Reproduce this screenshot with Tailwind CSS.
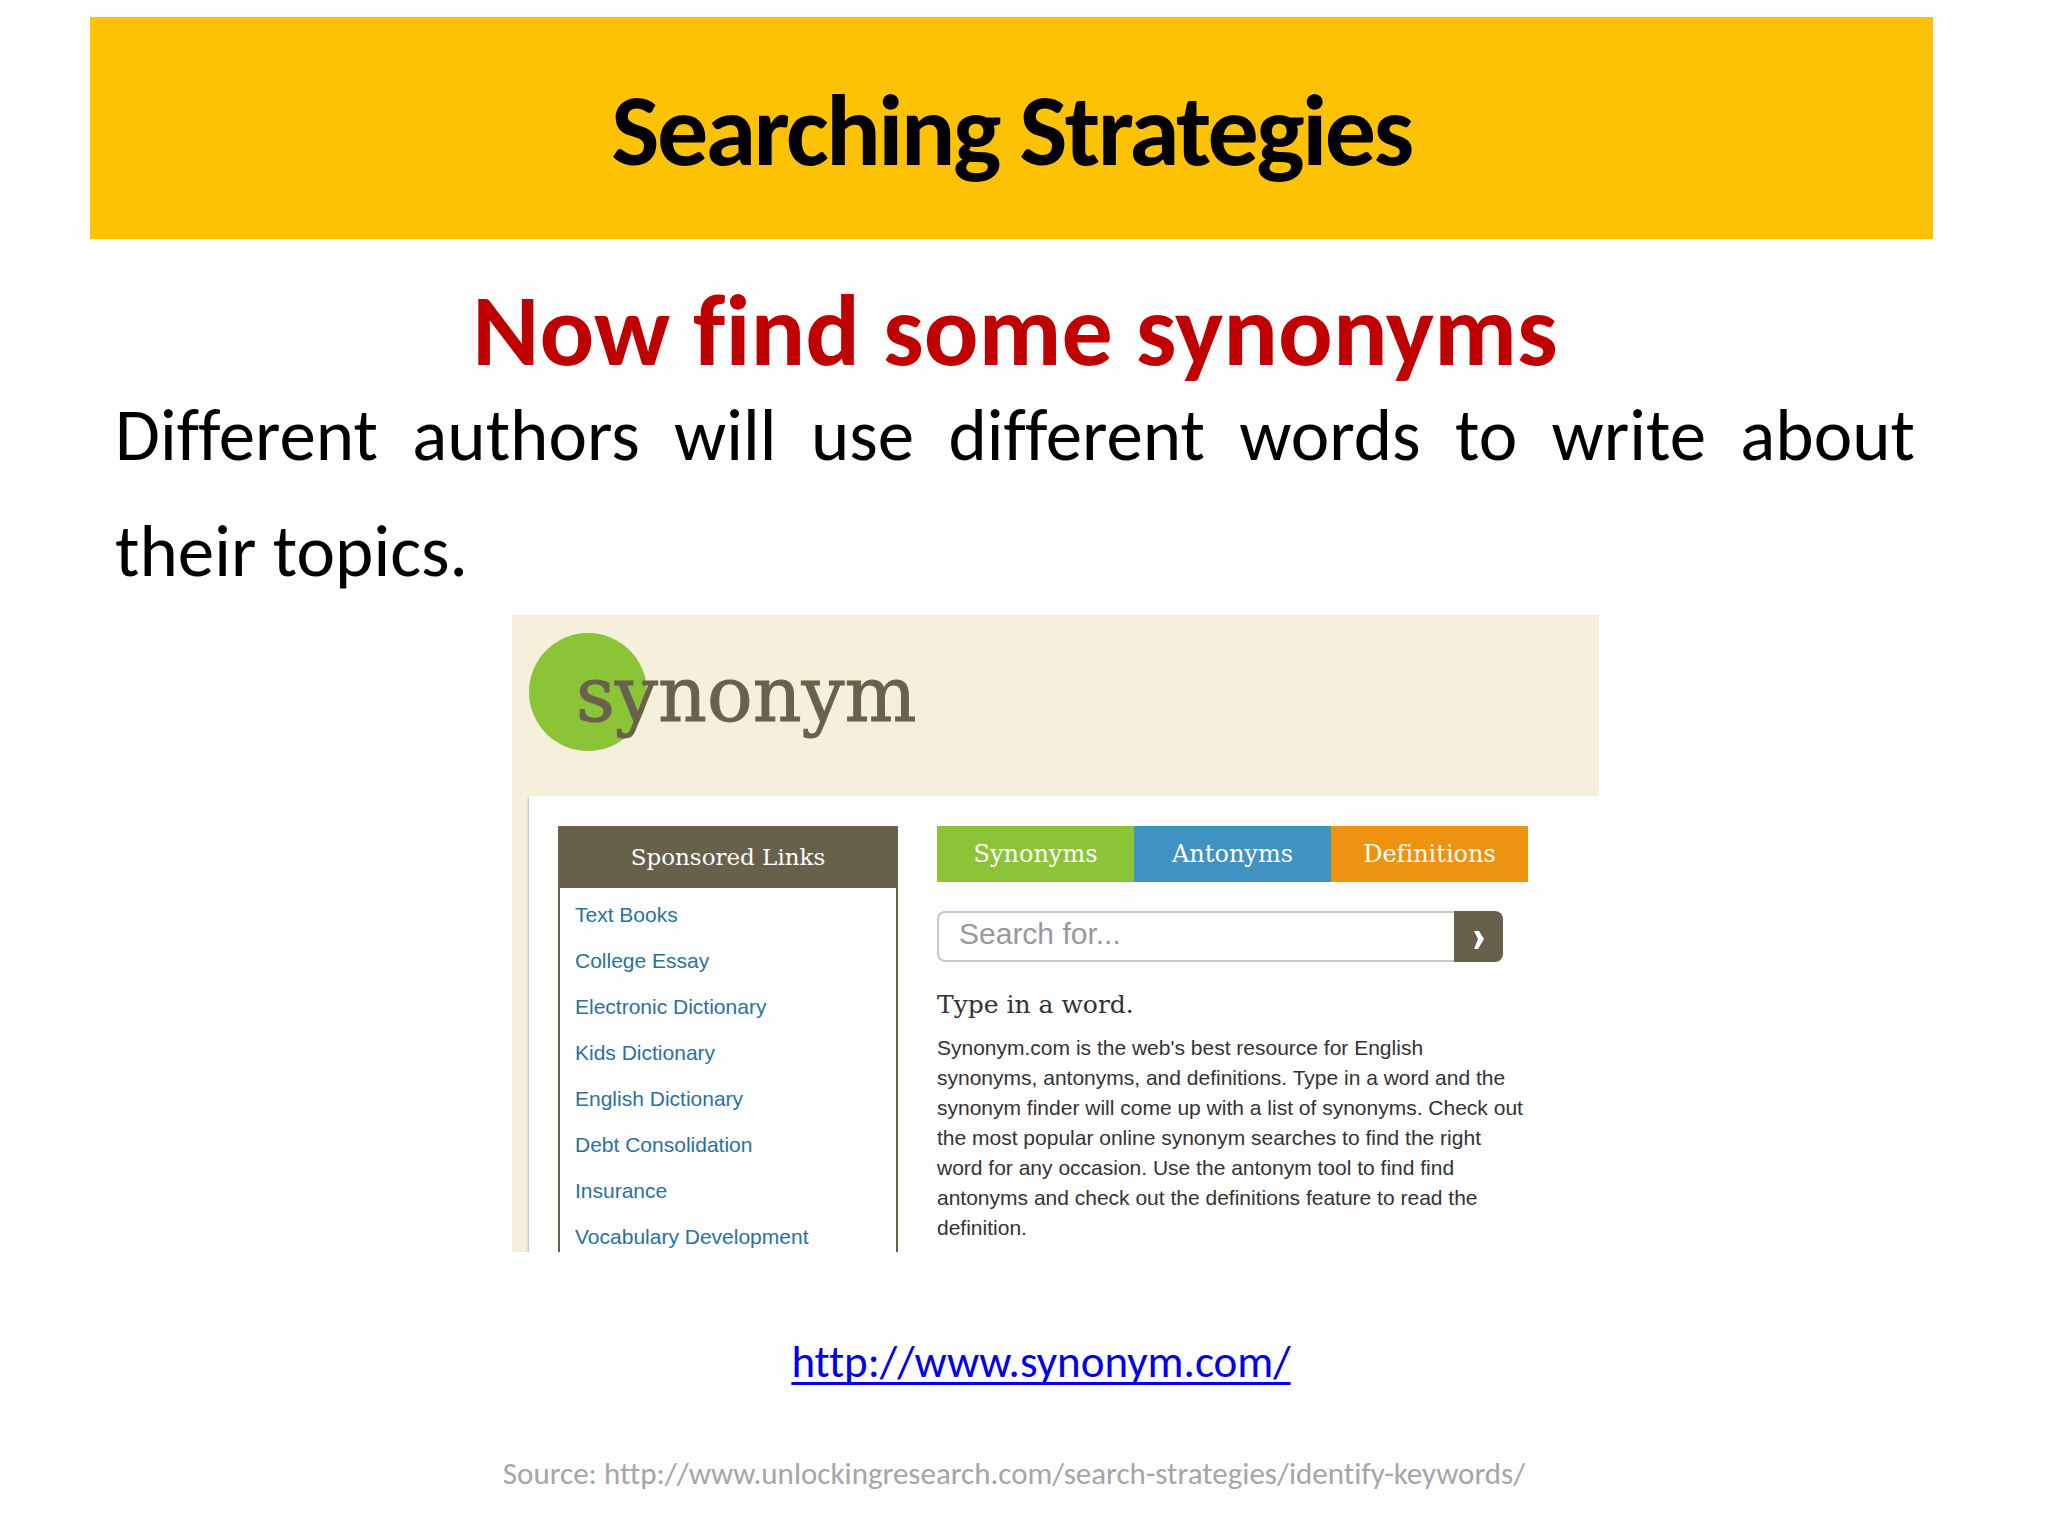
<!DOCTYPE html>
<html lang="en">
<head>
  <meta charset="UTF-8">
  <meta name="viewport" content="width=device-width, initial-scale=1.0">
  <title>Searching Strategies</title>
  <script src="https://cdn.jsdelivr.net/npm/@tailwindcss/browser@4"></script>
</head>
<body class="bg-[#fefefe] text-black font-[Carlito,Calibri,Lato,sans-serif] [font-variant-ligatures:none]">
  <!-- Title banner -->
  <header class="mt-[17px] ml-[90px] mr-[115px] h-[222px] pt-1 bg-[#fcc203] flex items-center justify-center">
    <h1 class="text-[102px] leading-[112px] font-bold tracking-tight">Searching Strategies</h1>
  </header>

  <main class="ml-[115px] mr-[133px]">
    <h2 class="mt-[44px] text-[102px] leading-[94px] font-bold text-center text-[#c00000]">Now find some synonyms</h2>
    <p class="text-[73px] leading-[116px] text-justify">Different authors will use different words to write about their topics.</p>

    <!-- Synonym.com preview -->
    <section class="mt-[6px] ml-[397px] mr-[316px] h-[637px] overflow-hidden bg-[#f5f0dc] flex flex-col">
      <div class="h-[181px] shrink-0 pt-[18px] pl-[17px]">
        <svg class="block" width="400" height="120" viewBox="0 0 400 120" role="img" aria-label="synonym">
          <circle cx="59" cy="59" r="59" fill="#8cc437"/>
          <text x="47" y="88" font-family="DejaVu Serif, serif" font-size="76" fill="#69614c" stroke="#69614c">synonym</text>
        </svg>
      </div>

      <div class="flex-1 ml-[17px] pl-[29px] pt-[30px] pr-[71px] bg-[#fefefe] shadow-[-1px_2px_2px_#bbb] flex gap-[39px] font-['Liberation_Sans',Arial,sans-serif]">
        <!-- Sponsored links -->
        <aside class="w-[340px] h-[500px] shrink-0 border-x-2 border-[#67614b]">
          <h3 class="h-[62px] bg-[#67614b] text-white text-[23px] leading-[62px] text-center font-['DejaVu_Serif',serif]">Sponsored Links</h3>
          <ul class="pt-1 pl-[15px] text-[21px] leading-[46px] text-[#2a71a0]">
            <li><a href="#">Text Books</a></li>
            <li><a href="#">College Essay</a></li>
            <li><a href="#">Electronic Dictionary</a></li>
            <li><a href="#">Kids Dictionary</a></li>
            <li><a href="#">English Dictionary</a></li>
            <li><a href="#">Debt Consolidation</a></li>
            <li><a href="#">Insurance</a></li>
            <li><a href="#">Vocabulary Development</a></li>
          </ul>
        </aside>

        <div class="flex-1 min-w-0">
          <nav class="grid grid-cols-3 text-center text-white text-[24px] leading-[56px] font-['DejaVu_Serif',serif]">
            <a href="#" class="bg-[#8cc437]">Synonyms</a>
            <a href="#" class="bg-[#3f92c2]">Antonyms</a>
            <a href="#" class="bg-[#ee930f]">Definitions</a>
          </nav>
          <form class="mt-[29px] mr-[25px] h-[51px] flex">
            <input type="text" aria-label="Search for" placeholder="Search for..." class="flex-1 min-w-0 pl-5 pb-[7px] border-2 border-r-0 border-[#c8c8c8] rounded-l-lg text-[30px] placeholder:text-[#999]">
            <button type="button" aria-label="Search" class="w-[49px] bg-[#67614b] rounded-r-lg flex items-center justify-center">
              <svg class="mt-[6px]" width="12" height="20" viewBox="0 0 12 20" fill="#fff"><path d="M1 1h5l5 8-6 10H1l4-10z"/></svg>
            </button>
          </form>
          <h3 class="mt-[25px] text-[25px] leading-[36px] text-[#333] font-['DejaVu_Serif',serif]">Type in a word.</h3>
          <p class="mt-[10px] text-[21px] leading-[30px] whitespace-nowrap text-[#333]">Synonym.com is the web's best resource for English<br>synonyms, antonyms, and definitions. Type in a word and the<br>synonym finder will come up with a list of synonyms. Check out<br>the most popular online synonym searches to find the right<br>word for any occasion. Use the antonym tool to find find<br>antonyms and check out the definitions feature to read the<br>definition.</p>
        </div>
      </div>
    </section>
  </main>

  <footer class="mt-[80px] flex flex-col items-center">
    <a href="http://www.synonym.com/" class="ml-[34px] text-[45px] leading-[60px] text-[#0000ee] underline decoration-[3px] underline-offset-[5px] [text-decoration-skip-ink:none]">http://www.synonym.com/</a>
    <p class="mt-[59px] mr-[20px] text-[31px] leading-[44px] text-[#a6a6a6]">Source: http://www.unlockingresearch.com/search-strategies/identify-keywords/</p>
  </footer>
</body>
</html>
